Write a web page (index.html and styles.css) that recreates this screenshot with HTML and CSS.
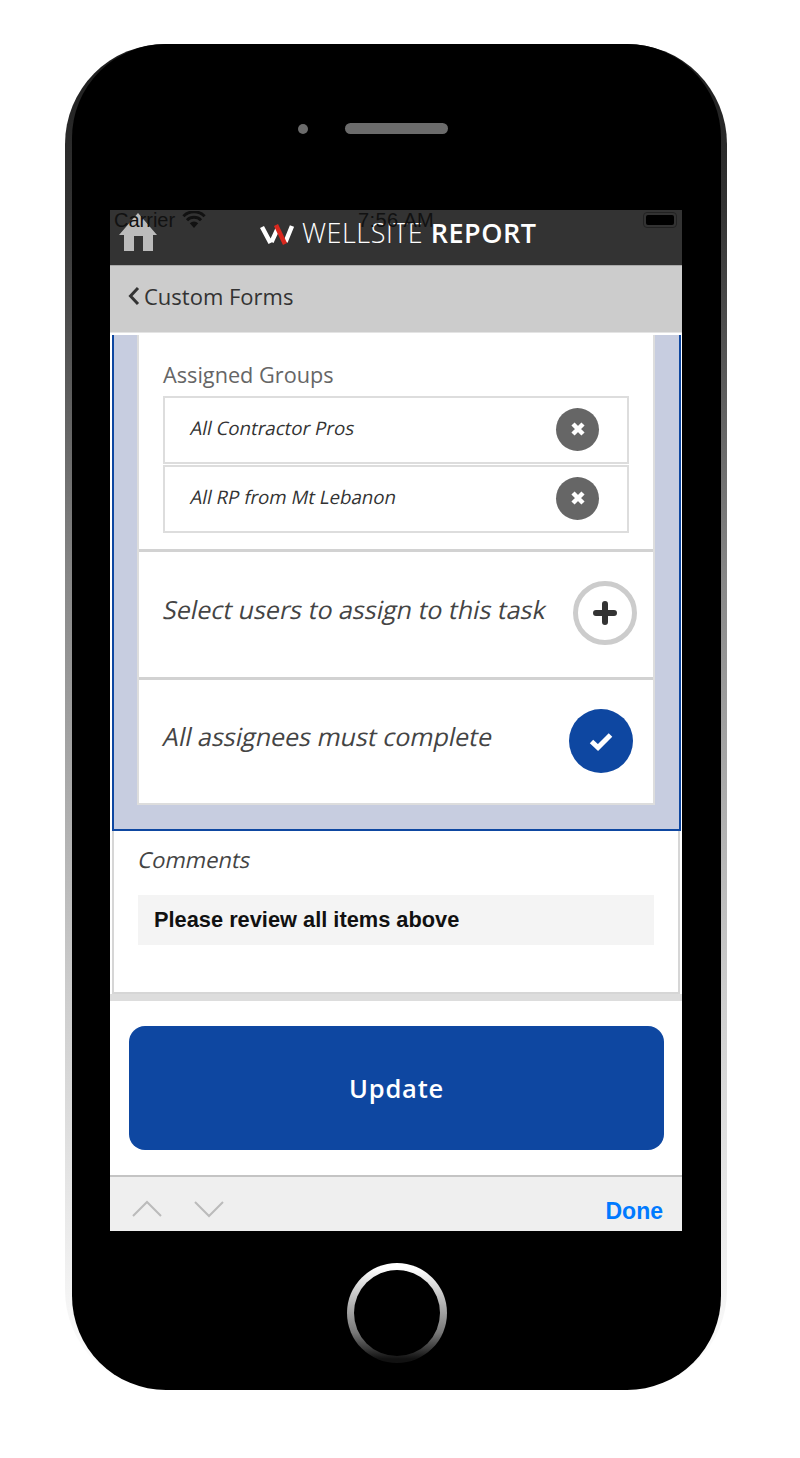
FILE: index.html
```html
<!DOCTYPE html>
<html lang="en">
  <head>
    <meta charset="UTF-8" />
    <title>Wellsite Report</title>
    <link rel="stylesheet" href="styles.css">
  </head>
  <body>
    <div class="phone">
      <div class="phone-face">
        <div class="earpiece">
          <span class="camera"></span>
          <span class="speaker"></span>
        </div>

        <div class="screen">
          <!-- iOS status bar sits over the app header -->
          <div class="status-bar">
            <span class="carrier">Carrier</span>
            <svg class="wifi" width="24" height="17" viewBox="0 0 24 17">
              <path d="M12 17 7.800 12.300a6 6 0 0 1 8.400 0Z" fill="#111"/>
              <path d="M5 9.200a10 10 0 0 1 14 0M1.400 5.200a15 15 0 0 1 21.200 0" fill="none" stroke="#111" stroke-width="3"/>
            </svg>
            <span class="clock">7:56 AM</span>
            <span class="battery"><span class="battery-fill"></span></span>
          </div>

          <header class="app-header">
            <svg class="home-icon" width="38" height="38" viewBox="0 0 38 38">
              <path d="M19 0 38 22H34V38H24V23H15V38H5V22H0Z" fill="#bbb"/>
            </svg>
            <svg class="logo" width="34" height="24" viewBox="0 0 34 24">
              <path d="M2 5 10.500 21M11.500 20 17.500 7M25.500 20 32 4" fill="none" stroke="#fff" stroke-width="4.500"/>
              <path d="M16 3 25 22" fill="none" stroke="#d8281e" stroke-width="4.500"/>
            </svg>
            <p class="brand">WELLSITE <b>REPORT</b></p>
          </header>

          <nav class="nav-bar">
            <svg width="12" height="20" viewBox="0 0 12 20">
              <path d="M10 2 2.500 10 10 18" fill="none" stroke="#333" stroke-width="3"/>
            </svg>
            <span>Custom Forms</span>
          </nav>

          <div class="content">
            <section class="assign-box">
              <div class="assign-card">
                <div class="groups">
                  <p class="groups-title">Assigned Groups</p>
                  <div class="group-row">
                    <span class="slanted">All Contractor Pros</span>
                    <span class="remove">
                      <svg width="16" height="16" viewBox="0 0 16 16">
                        <path d="M3 3 13 13M13 3 3 13" stroke="#fff" stroke-width="4.500"/>
                      </svg>
                    </span>
                  </div>
                  <div class="group-row">
                    <span class="slanted">All RP from Mt Lebanon</span>
                    <span class="remove">
                      <svg width="16" height="16" viewBox="0 0 16 16">
                        <path d="M3 3 13 13M13 3 3 13" stroke="#fff" stroke-width="4.500"/>
                      </svg>
                    </span>
                  </div>
                </div>

                <div class="option">
                  <span class="option-label slanted">Select users to assign to this task</span>
                  <span class="add">
                    <svg width="24" height="24" viewBox="0 0 24 24">
                      <path d="M12 3V21M3 12H21" stroke="#333" stroke-width="6" stroke-linecap="round"/>
                    </svg>
                  </span>
                </div>

                <div class="option option-last">
                  <span class="option-label slanted">All assignees must complete</span>
                  <span class="checked">
                    <svg width="26" height="20" viewBox="0 0 26 20">
                      <path d="M3.500 10.500 10 16.500 22.500 4" fill="none" stroke="#fff" stroke-width="5"/>
                    </svg>
                  </span>
                </div>
              </div>
            </section>

            <section class="comments">
              <p class="comments-title"><span class="slanted">Comments</span></p>
              <div class="comments-text">Please review all items above</div>
            </section>

            <div class="divider"></div>

            <div class="actions">
              <button class="update-btn">Update</button>
            </div>
          </div>

          <div class="keyboard-bar">
            <svg width="30" height="18" viewBox="0 0 30 18">
              <path d="M1 16 15 2 29 16" fill="none" stroke="#bbb" stroke-width="2"/>
            </svg>
            <svg width="30" height="18" viewBox="0 0 30 18">
              <path d="M1 2 15 16 29 2" fill="none" stroke="#bbb" stroke-width="2"/>
            </svg>
            <span class="done">Done</span>
          </div>
        </div>

        <div class="home-area">
          <span class="home-button"></span>
        </div>
      </div>
    </div>
  </body>
</html>
```

FILE: styles.css
```css
* {
  padding: 0;
  margin: 0;
  box-sizing: border-box;
  font-family: "Open Sans", Arial, sans-serif;
}

body {
  background-color: #fff;
  height: 1458px;
  padding: 44px 0 0 65px;
}

/* the installed italic is condensed, so lean the upright face instead */
.slanted {
  display: inline-block;
  transform: skewX(-12deg);
}

/* phone shell */
.phone {
  width: 662px;
  height: 1346px;
  padding-left: 7px;
  padding-right: 6px;
  border-radius: 100px;
  background: linear-gradient(#1c1c1c 0%, #333 12%, #888 40%, #ccc 70%, #f2f2f2 92%, #fff 100%);
}

.phone-face {
  height: 100%;
  border-radius: 94px;
  background-color: #000;
  display: flex;
  flex-direction: column;
  align-items: center;
}

.earpiece {
  height: 166px;
  padding: 79px 47px 0 0;
  display: flex;
  align-items: flex-start;
  gap: 37px;
}

.camera {
  width: 10px;
  height: 10px;
  margin-top: 1px;
  border-radius: 50%;
  background-color: #6b6b6b;
}

.speaker {
  width: 103px;
  height: 11px;
  border-radius: 6px;
  background-color: #6b6b6b;
}

.screen {
  position: relative;
  width: 572px;
  height: 1021px;
  margin-right: 1px;
  flex-shrink: 0;
  background-color: #fff;
  display: flex;
  flex-direction: column;
}

.home-area {
  flex: 1;
  display: flex;
  justify-content: center;
  padding-top: 32px;
}

.home-button {
  width: 100px;
  height: 100px;
  border-radius: 50%;
  background: linear-gradient(#fff 5%, #aaa 45%, #777 70%, #111 96%);
  display: flex;
}

.home-button::after {
  content: "";
  margin: 7px;
  flex: 1;
  border-radius: 50%;
  background-color: #000;
}

/* status bar */
.status-bar {
  position: absolute;
  top: 0;
  left: 0;
  right: 0;
  height: 20px;
  z-index: 2;
  color: #111;
  font-size: 20px;
  line-height: 20px;
}

.status-bar span {
  font-family: "Liberation Sans", Arial, sans-serif;
}

.carrier {
  position: absolute;
  left: 4px;
  top: 0;
}

.wifi {
  position: absolute;
  left: 72px;
  top: 1px;
}

.clock {
  position: absolute;
  left: 248px;
  top: 0;
  letter-spacing: 0.4px;
}

.battery {
  position: absolute;
  left: 533px;
  top: 2px;
  width: 34px;
  height: 16px;
  border: 1px solid #222;
  border-radius: 4px;
  padding: 2px;
}

.battery-fill {
  display: block;
  height: 100%;
  border-radius: 2px;
  background-color: #000;
}

/* app header */
.app-header {
  position: relative;
  height: 55px;
  background-color: #333;
  display: flex;
  align-items: flex-start;
  padding: 10px 0 0 150px;
  gap: 8px;
}

.home-icon {
  position: absolute;
  left: 9px;
  top: 3px;
}

.logo {
  margin-top: 2px;
}

.brand {
  color: #fff;
  font-size: 27px;
  line-height: 26px;
  font-weight: 300;
  letter-spacing: 0.5px;
  white-space: nowrap;
}

.brand b {
  font-weight: 600;
}

.nav-bar {
  height: 68px;
  border-top: 1px solid #aaa;
  border-bottom: 1px solid #e4e4e4;
  background-color: #ccc;
  display: flex;
  align-items: center;
  padding: 0 0 7px 18px;
  gap: 4px;
  color: #333;
  font-size: 22px;
}

.content {
  flex: 1;
  padding-top: 2px;
}

/* blue box */
.assign-box {
  width: 569px;
  height: 496px;
  margin-left: 2px;
  padding: 0 24px 24px 23px;
  background-color: #c7cde0;
  border: solid #0e47a1;
  border-width: 0 2px 2px;
}

.assign-card {
  height: 470px;
  background-color: #fff;
  border: solid #ddd;
  border-width: 0 2px 2px;
}

.groups {
  height: 217px;
  padding: 25px 24px 0 24px;
  border-bottom: 3px solid #d2d2d2;
}

.groups-title {
  color: #666;
  font-size: 21.700px;
  line-height: 30px;
  margin-bottom: 6px;
}

.group-row {
  height: 68px;
  margin-bottom: 1px;
  border: 2px solid #ddd;
  display: flex;
  align-items: center;
  justify-content: space-between;
  padding: 0 28px 5px 26px;
  font-size: 18.700px;
  color: #333;
}

.remove {
  width: 43px;
  height: 43px;
  margin-top: 3px;
  border-radius: 50%;
  background-color: #666;
  display: flex;
  align-items: center;
  justify-content: center;
}

.option {
  height: 128px;
  padding: 0 16px 0 25px;
  border-bottom: 3px solid #d2d2d2;
  display: flex;
  align-items: center;
  justify-content: space-between;
  color: #444;
}

.option-label {
  margin-top: -11px;
  font-size: 25px;
}

.option-last {
  height: 126px;
  padding-right: 20px;
  padding-bottom: 0;
  border-bottom: 0;
}

.option-last .option-label {
  margin-top: -15px;
}

.add,
.checked {
  width: 64px;
  height: 64px;
  border-radius: 50%;
  display: flex;
  align-items: center;
  justify-content: center;
}

.add {
  margin-top: -3px;
  border: 5px solid #ccc;
}

.checked {
  margin-top: -4px;
  background-color: #0e47a1;
}

/* comments */
.comments {
  width: 568px;
  height: 163px;
  margin-left: 2px;
  padding: 14px 24px 0 24px;
  border: solid #d6d6d6;
  border-width: 0 2px 2px;
}

.comments-title {
  font-size: 22px;
  line-height: 28px;
  color: #444;
  margin-bottom: 22px;
  padding-left: 1px;
}

.comments-text {
  height: 50px;
  padding-left: 16px;
  background-color: #f4f4f4;
  color: #111;
  font-family: "Liberation Sans", Arial, sans-serif;
  font-size: 21.800px;
  font-weight: 700;
  line-height: 50px;
}

.divider {
  height: 7px;
  background-color: #ddd;
}

.actions {
  padding: 25px 18px 0 19px;
}

.update-btn {
  display: block;
  width: 100%;
  height: 124px;
  padding-bottom: 1px;
  border: 0;
  border-radius: 16px;
  background-color: #0e47a1;
  color: #fff;
  font-size: 25.500px;
  font-weight: 600;
  letter-spacing: 0.8px;
}

/* keyboard accessory */
.keyboard-bar {
  height: 56px;
  flex-shrink: 0;
  border-top: 2px solid #c4c4c4;
  background-color: #efefef;
  display: flex;
  align-items: flex-start;
  padding: 23px 19px 0 22px;
  gap: 32px;
}

.done {
  margin-left: auto;
  margin-top: -2px;
  color: #007aff;
  font-family: "Liberation Sans", Arial, sans-serif;
  font-size: 23px;
  font-weight: 700;
}
```
